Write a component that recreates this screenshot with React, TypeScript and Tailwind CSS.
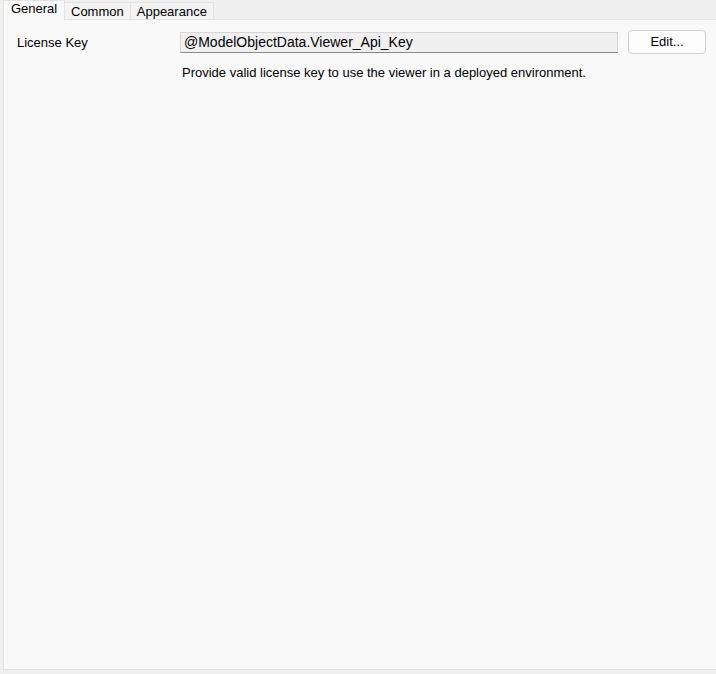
export default function App() {
  const tabs = ["General", "Common", "Appearance"];
  return (
    <div
      className="flex h-[674px] w-[716px] flex-col overflow-hidden bg-[#f0f0f0] text-[13px] text-black"
      style={{ fontFamily: '"Liberation Sans", Arial, sans-serif' }}
    >
      <div className="flex h-[19px] items-end pl-[3px]">
        {tabs.map((t, i) =>
          i === 0 ? (
            <div
              key={t}
              className="relative z-10 -mb-px flex h-[20px] w-[62px] items-start justify-center border border-b-0 border-[#e3e3e3] bg-[#f9f9f9] text-[13px] leading-[16px]"
            >
              {t}
            </div>
          ) : (
            <div
              key={t}
              className="flex h-[17px] items-center border border-b-0 border-l-0 border-[#e3e3e3] bg-[#f3f3f3] px-[6px] text-[13px] leading-[15px]"
            >
              {t}
            </div>
          )
        )}
      </div>
      <div className="ml-[3px] mb-[4px] flex-1 border border-r-0 border-[#e3e3e3] bg-[#f9f9f9]">
        <div className="flex items-start pt-[10px]">
          <div className="w-[176px] pl-[13px] pt-[3px]">License Key</div>
          <div className="flex flex-1 flex-col">
            <div className="flex items-center">
              <div className="flex h-[21px] w-[438px] items-center border border-[#d6d6d6] border-b-[#8a8a8a] bg-[#f0f0f0] pl-[3px] text-[14px]">
                @ModelObjectData.Viewer_Api_Key
              </div>
              <button
                type="button"
                className="ml-[10px] flex h-[24px] w-[78px] items-center justify-center rounded-[4px] border border-[#d0d0d0] bg-[#fdfdfd] text-[13px]"
              >
                Edit...
              </button>
            </div>
            <div className="pl-[2px] pt-[9px] text-[13px]">
              Provide valid license key to use the viewer in a deployed environment.
            </div>
          </div>
        </div>
      </div>
    </div>
  );
}
